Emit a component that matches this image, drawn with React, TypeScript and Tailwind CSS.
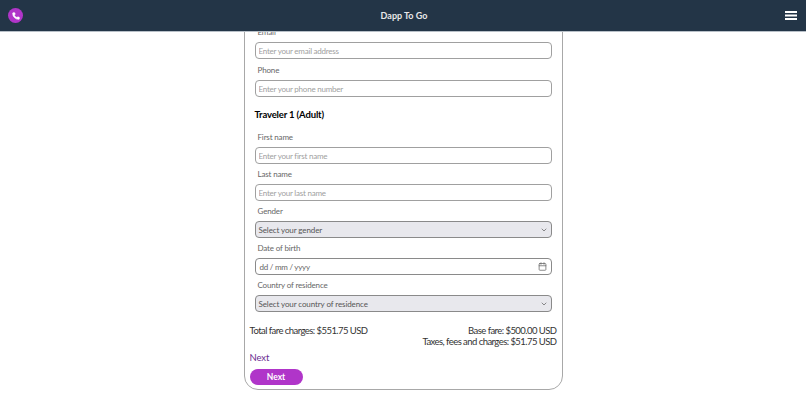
import { Phone, Calendar, ChevronDown } from 'lucide-react'

const font = "font-['Lato','Liberation_Sans',sans-serif]"

function Label({ text }: { text: string }) {
  return <div className="h-[20px] pl-[3px] text-[8px] leading-[20px] tracking-[-0.15px] text-[#666]">{text}</div>
}

function TextField({ placeholder }: { placeholder: string }) {
  return (
    <input
      placeholder={placeholder}
      className="block h-[17px] w-full rounded-[4px] border border-[#a0a0a0] bg-white px-[3px] text-[8px] tracking-[-0.23px] outline-none placeholder:text-[#a0a0a0]"
    />
  )
}

function SelectField({ text }: { text: string }) {
  return (
    <div className="flex h-[17px] w-full items-center justify-between rounded-[4px] border border-[#8a8a8a] bg-[#e8e8ed] px-[3px] text-[8px] tracking-[-0.1px] text-[#555]">
      <span>{text}</span>
      <ChevronDown size={8} strokeWidth={2} className="text-[#555]" />
    </div>
  )
}

export default function App() {
  return (
    <div className={`h-[411px] w-[806px] overflow-hidden bg-white ${font}`}>
      <header className="relative z-10 flex h-[32px] items-center justify-between border-b border-[#b8c0c8] bg-[#233547] pl-[8px] pr-[9px]">
        <div className="flex h-[15px] w-[15px] items-center justify-center rounded-full bg-[#b035c9]">
          <Phone size={8} fill="white" stroke="white" />
        </div>
        <div className="text-[9px] font-bold text-[#e8e8e8]">Dapp To Go</div>
        <svg width="12" height="9" viewBox="0 0 12 9" fill="white">
          <rect y="0" width="12" height="2" />
          <rect y="3.5" width="12" height="2" />
          <rect y="7" width="12" height="2" />
        </svg>
      </header>
      <main className="flex justify-center">
        <div className="mt-[-11px] h-[369px] w-[319px] rounded-b-[14px] border border-[#a8a8a8] px-[5px]">
          <div className="px-[5px]">
            <Label text="Email" />
            <TextField placeholder="Enter your email address" />
            <div className="mt-[1px]">
              <Label text="Phone" />
            </div>
            <TextField placeholder="Enter your phone number" />
            <h2 className="mt-[10px] h-[16px] text-[9.5px] font-bold leading-[16px] tracking-[-0.15px] text-black">Traveler 1 (Adult)</h2>
            <div className="mt-[4px]">
              <Label text="First name" />
              <TextField placeholder="Enter your first name" />
              <Label text="Last name" />
              <TextField placeholder="Enter your last name" />
              <Label text="Gender" />
              <SelectField text="Select your gender" />
              <Label text="Date of birth" />
              <div className="flex h-[17px] w-full items-center justify-between rounded-[4px] border border-[#8a8a8a] bg-white pl-[4px] pr-[4px] text-[8px] tracking-[-0.25px] text-[#666]">
                <span>dd / mm / yyyy</span>
                <Calendar size={9} className="text-[#666]" />
              </div>
              <Label text="Country of residence" />
              <SelectField text="Select your country of residence" />
            </div>
          </div>
          <div className="mt-[13px] flex justify-between whitespace-nowrap text-[9.5px] leading-[11px] tracking-[-0.55px] text-[#333]">
            <div>Total fare charges: $551.75 USD</div>
            <div className="text-right">
              <div>Base fare: $500.00 USD</div>
              <div>Taxes, fees and charges: $51.75 USD</div>
            </div>
          </div>
          <div className="mt-[5px] text-[9.5px] leading-[12px] tracking-[-0.1px] text-[#6b2c91]">Next</div>
          <button className="mt-[5px] block h-[16px] w-[53px] rounded-full bg-[#b035c9] text-[8.5px] font-bold text-white">Next</button>
        </div>
      </main>
    </div>
  )
}
